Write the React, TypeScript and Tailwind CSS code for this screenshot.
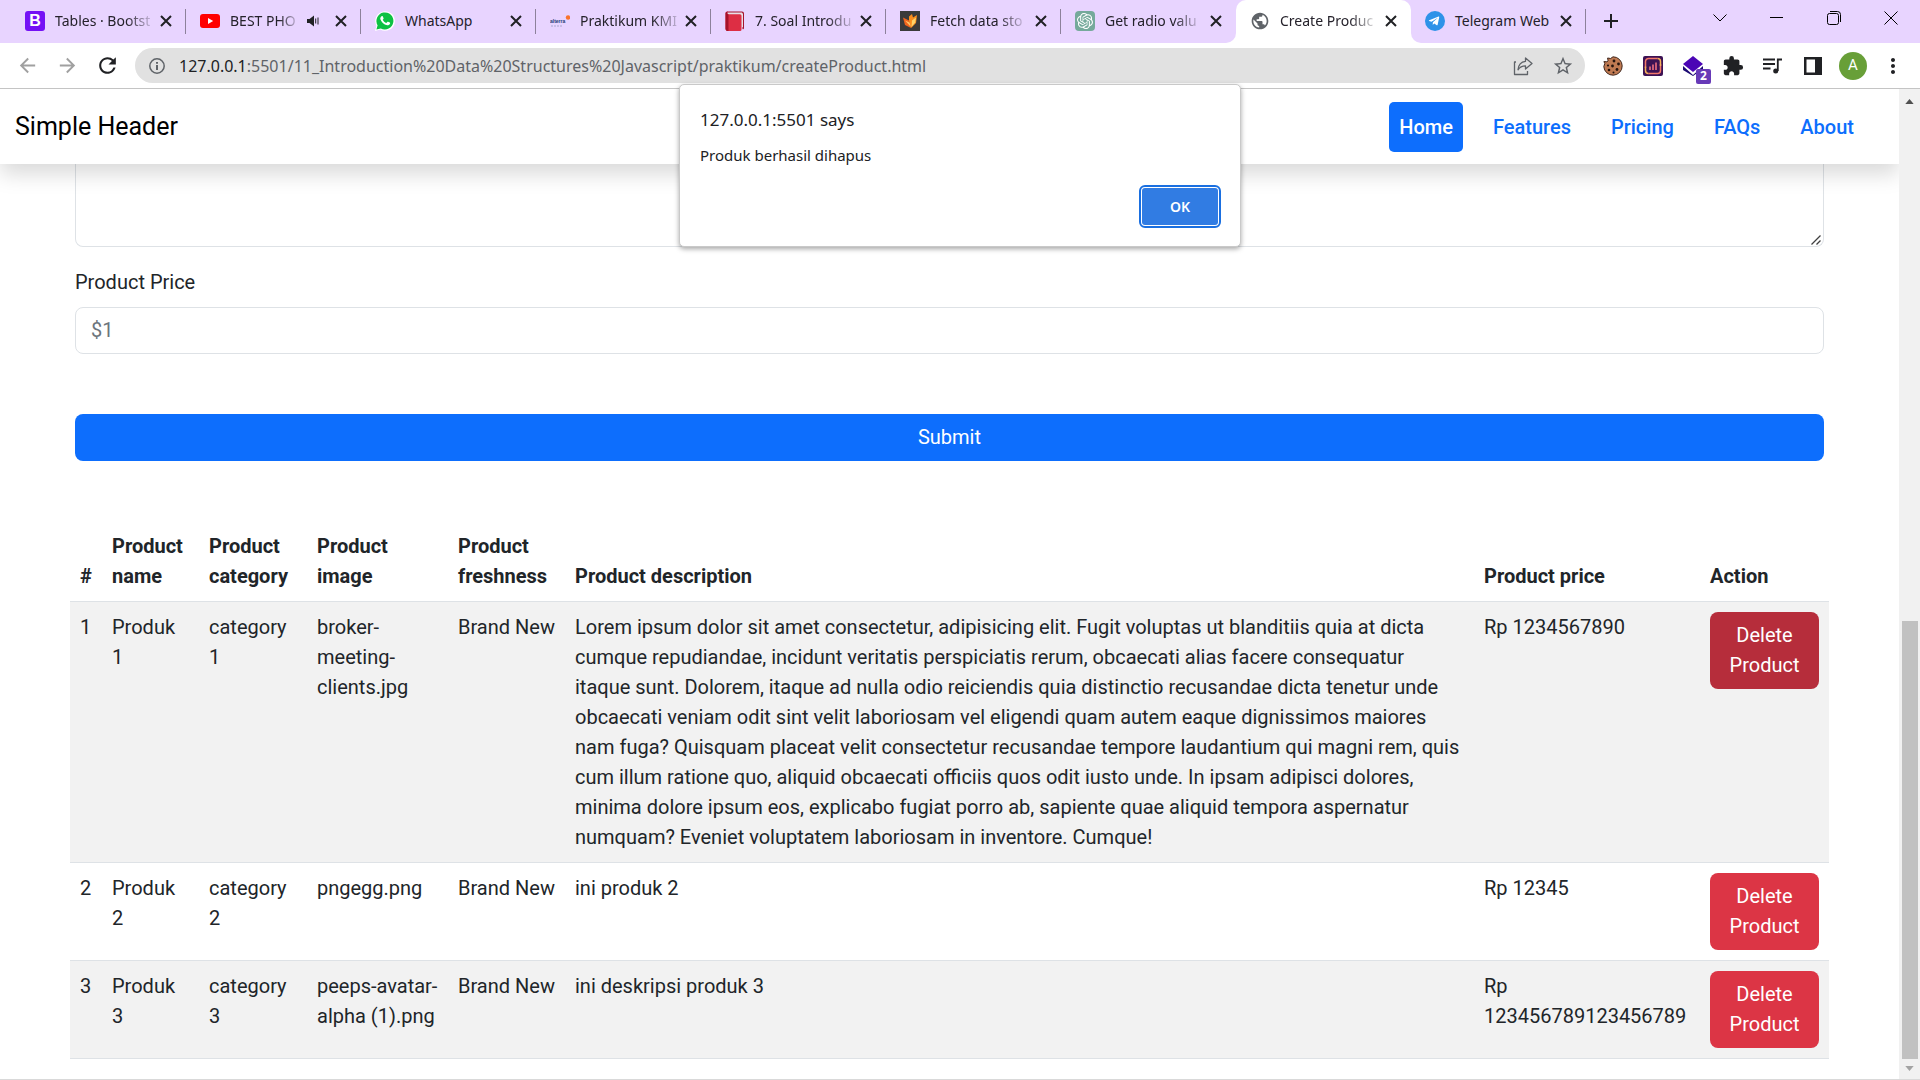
import React from "react";
import {
  MdArrowBack,
  MdArrowForward,
  MdRefresh,
  MdStarBorder,
  MdExtension,
  MdMoreVert,
  MdPublic,
} from "react-icons/md";
import { FaTelegramPlane } from "react-icons/fa";
import { SiOpenai } from "react-icons/si";

const BootstrapIcon = () => (
  <span className="flex size-5 items-center justify-center rounded-[3px] bg-[#7411f5] font-['Liberation_Sans'] text-base leading-5 font-bold text-white">
    B
  </span>
);

const YoutubeIcon = () => (
  <svg viewBox="0 0 20 20" className="size-5">
    <rect y="3" width="20" height="14" rx="3" fill="#f00" />
    <path d="M8 7l5.200 3-5.200 3z" fill="#fff" />
  </svg>
);

const WhatsappIcon = () => (
  <svg viewBox="0 0 20 20" className="size-5">
    <path d="M0 20l1.500-5.200A9.800 9.800 0 1 1 5.300 18.600z" fill="#fff" />
    <path d="M1.400 18.600l1.200-4.300A8.500 8.500 0 1 1 5.800 17.400z" fill="#0dc143" />
    <path
      d="M6.600 5.200c.5-.3 1-.2 1.200.2l.8 1.800c.1.300 0 .6-.9 1.600.8 1.600 2 2.600 3.600 3.300l1-1.200c.2-.3.500-.3.800-.2l1.700.8c.4.200.4.500.3 1-.3 1.300-1.700 1.900-2.900 1.800-3.400-.6-6.100-3.300-6.900-6.200-.2-1.300.4-2.300 1.300-2.900z"
      fill="#fff"
    />
  </svg>
);

const AlterraIcon = () => (
  <svg viewBox="0 0 20 20" className="size-5">
    <text x="0" y="12" fontSize="5" fontWeight="700" fontFamily="Liberation Sans" fill="#1d3a73">
      alterra
    </text>
    <path d="M1 15h12" stroke="#a9a6cf" strokeWidth="1" strokeDasharray="2 1" />
    <circle cx="18" cy="6.500" r="2.200" fill="#f9732b" />
  </svg>
);

const BookIcon = () => (
  <svg viewBox="0 0 20 20" className="size-5">
    <path d="M2.500.5H17a2 2 0 0 1 2 2V17a1 1 0 0 1-1.500 1L17 4H2z" fill="#a5122a" />
    <path d="M2.500 1.500H17L18 3v13l-1.500.5L16 4H2z" fill="#e6dfe6" />
    <path d="M.5 2.500C.5 1.200 1.500.4 3 .5 1.800 1.500 2 3 3.500 3.300H15a1.500 1.500 0 0 1 1.500 1.500V18.500A1.500 1.500 0 0 1 15 20H3a2.500 2.500 0 0 1-2.500-2.500z" fill="#dd2e44" />
    <path d="M.5 2.500C.5 1.200 1.500.4 3 .5 1.800 1.500 2 3 3.500 3.300V20H3a2.500 2.500 0 0 1-2.500-2.500z" fill="#a5122a" />
  </svg>
);

const FoxIcon = () => (
  <svg viewBox="0 0 20 20" className="size-5">
    <rect width="20" height="20" fill="#3b3a3a" />
    <path d="M3 6.500l6 3 2 7.500-6-3z" fill="#f1641c" />
    <path d="M9 10V5.500L12 3l1 3.500L17 4l-1 8-5 5z" fill="#fb8c1c" />
    <path d="M12 9.500l4-3-.8 5L11.500 16z" fill="#fdd36a" />
    <path d="M5 9.500l4.500 2 1.500 4.500z" fill="#fdc66a" />
  </svg>
);

const OpenaiIcon = () => (
  <span className="flex size-5 items-center justify-center rounded-[4px] bg-[#75a99b] text-white">
    <SiOpenai className="size-4" />
  </span>
);

const TelegramIcon = () => (
  <span className="flex size-5 items-center justify-center rounded-full bg-[#2e92e8] text-white">
    <FaTelegramPlane className="mr-0.5 size-3" />
  </span>
);

const SpeakerIcon = () => (
  <svg viewBox="0 0 12 12" className="size-3 shrink-0">
    <path d="M0 4h2.500L7 .5v11L2.500 8H0z" fill="#202124" />
    <path d="M8.700 3.500v5M11 2.500v7" stroke="#202124" strokeWidth="1" />
  </svg>
);

type Tab = { title: string; icon: React.ReactNode; audio?: boolean; active?: boolean; fade?: boolean };

const tabs: Tab[] = [
  { title: "Tables · Bootst", icon: <BootstrapIcon />, fade: true },
  { title: "BEST PHO", icon: <YoutubeIcon />, audio: true, fade: true },
  { title: "WhatsApp", icon: <WhatsappIcon /> },
  { title: "Praktikum KMI", icon: <AlterraIcon />, fade: true },
  { title: "7. Soal Introdu", icon: <BookIcon />, fade: true },
  { title: "Fetch data sto", icon: <FoxIcon />, fade: true },
  { title: "Get radio valu", icon: <OpenaiIcon />, fade: true },
  { title: "Create Produc", icon: <MdPublic className="size-5 text-[#5f6368]" />, active: true, fade: true },
  { title: "Telegram Web", icon: <TelegramIcon /> },
];

function TabStrip() {
  const activeIndex = tabs.findIndex((t) => t.active);
  return (
    <div className="flex h-[43px] bg-[#e8d4ff] pl-[11px]">
      {tabs.map((t, i) => (
        <div key={t.title} className={`min-w-0 flex-[0_1_175px] ${i === activeIndex - 1 || i === activeIndex + 1 ? "bg-white" : ""}`}>
          <div
            className={`flex h-full items-center ${
              t.active
                ? "rounded-t-[10px] bg-white"
                : i === activeIndex - 1
                  ? "rounded-br-[10px] bg-[#e8d4ff]"
                  : i === activeIndex + 1
                    ? "rounded-bl-[10px] bg-[#e8d4ff]"
                    : ""
            }`}
          >
            <div className="flex min-w-0 flex-1 items-center pr-[9px] pb-px pl-[14px]">
              <span className="size-5 shrink-0">{t.icon}</span>
              <a href="#" className="ml-2.5 min-w-0 flex-1 text-sm leading-5 whitespace-nowrap text-[#25222b]">
                <span className={t.fade ? "[mask-image:linear-gradient(to_right,black_75%,rgb(0_0_0/0.2))]" : ""}>{t.title}</span>
              </a>
              <span className={`flex items-center ${t.audio ? "gap-3" : ""}`}>
                {t.audio && <SpeakerIcon />}
                <button aria-label={`Close ${t.title}`} className="flex size-5 items-center justify-center text-[#202124]">
                  <svg viewBox="0 0 12 12" className="size-3" fill="none" stroke="currentColor" strokeWidth="2">
                    <path d="M1 1l10 10M11 1L1 11" />
                  </svg>
                </button>
              </span>
            </div>
            <span className={`h-[25px] w-px ${t.active || i === activeIndex - 1 ? "" : "bg-[#8d819b]"}`} />
          </div>
        </div>
      ))}
      <button aria-label="New tab" className="ml-[18px] flex items-center pb-px text-[#202124]">
        <svg viewBox="0 0 14 14" className="size-3.5" fill="none" stroke="currentColor" strokeWidth="2">
          <path d="M7 0v14M0 7h14" />
        </svg>
      </button>
      <div className="ml-auto flex h-[35px] items-center pr-px text-black">
        <button aria-label="Search tabs" className="flex w-[57px] justify-center">
          <svg viewBox="0 0 14 8" className="h-2 w-3.5" fill="none" stroke="currentColor">
            <path d="M.5.500l6.500 6.500 6.500-6.500" />
          </svg>
        </button>
        <button aria-label="Minimize" className="flex w-[57px] justify-center">
          <span className="h-px w-[13px] bg-black" />
        </button>
        <button aria-label="Restore" className="flex w-[57px] justify-center">
          <svg viewBox="0 0 14 14" className="size-3.5" fill="none" stroke="currentColor">
            <rect x=".5" y="2.500" width="11" height="11" rx="2" />
            <path d="M3 .5h7.500a3 3 0 0 1 3 3V11" />
          </svg>
        </button>
        <button aria-label="Close window" className="flex w-[57px] justify-center">
          <svg viewBox="0 0 14 14" className="size-3.5" fill="none" stroke="currentColor">
            <path d="M.5.500l13 13M13.500.500l-13 13" />
          </svg>
        </button>
      </div>
    </div>
  );
}

const IconSlot = ({ label, children }: { label: string; children: React.ReactNode }) => (
  <button aria-label={label} className="relative flex w-10 shrink-0 items-center justify-center">
    {children}
  </button>
);

function Toolbar() {
  return (
    <div className="flex h-[46px] items-center border-b border-[#c4c4c4] bg-white pr-[7px] pl-[7px]">
      <IconSlot label="Back">
        <MdArrowBack className="size-[23px] text-[#a0a0a0]" />
      </IconSlot>
      <IconSlot label="Forward">
        <MdArrowForward className="size-[23px] text-[#a0a0a0]" />
      </IconSlot>
      <IconSlot label="Reload">
        <MdRefresh className="size-[25px] text-[#202124]" />
      </IconSlot>
      <div className="ml-2 flex h-[35px] min-w-0 flex-1 items-center rounded-full bg-[#e1e1e1] pr-0.5 pl-3.5 text-[#5f6368]">
        <svg viewBox="0 0 16 16" className="size-4 shrink-0" fill="none" stroke="currentColor" strokeWidth="1.500">
          <circle cx="8" cy="8" r="7.200" />
          <path d="M8 7v5M8 4v1.800" strokeWidth="2" />
        </svg>
        <div className="ml-3.5 min-w-0 flex-1 truncate text-base leading-6">
          <span className="text-[#202124]">127.0.0.1</span>
          :5501/11_Introduction%20Data%20Structures%20Javascript/praktikum/createProduct.html
        </div>
        <IconSlot label="Share">
          <svg viewBox="0 0 20 20" className="size-5" fill="none" stroke="currentColor" strokeWidth="1.300" strokeLinejoin="round">
            <path d="M3 6H1.500v12.500h13V15" />
            <path d="M12.500 2l6.500 5.500-6.500 5.500v-3.200c-3.500 0-5.800 1.200-7.500 4 .4-4.600 3-8 7.500-8.500z" />
          </svg>
        </IconSlot>
        <IconSlot label="Bookmark">
          <MdStarBorder className="size-[22px]" />
        </IconSlot>
      </div>
      <div className="ml-2 flex items-center">
        <IconSlot label="Cookie editor">
          <svg viewBox="0 0 20 20" className="size-5">
            <path
              d="M10 .8a9.200 9.200 0 1 1-9.200 9.700l1-3L.9 5.600l3 .2 1.200-1L4.600 2l3 .5z"
              fill="#bf7a52"
              stroke="#3f2419"
              strokeWidth="1"
            />
            <g fill="#23130e">
              <circle cx="11" cy="5" r="1.400" />
              <circle cx="15.500" cy="8" r="1.400" />
              <circle cx="9.500" cy="10" r="1.400" />
              <circle cx="5" cy="9.500" r="1.100" />
              <circle cx="14" cy="13.500" r="1.400" />
              <circle cx="6" cy="14" r="1.300" />
              <circle cx="10.500" cy="16.500" r="1" />
            </g>
          </svg>
        </IconSlot>
        <IconSlot label="Insights">
          <svg viewBox="0 0 20 20" className="size-5" fill="none">
            <rect width="20" height="20" rx="2" fill="#3c1254" />
            <path d="M2.500 12V5.500a3 3 0 0 1 3-3h9M17.500 8v6.500a3 3 0 0 1-3 3h-9" stroke="#f2776a" strokeWidth="1.500" />
            <path d="M14.500 2.500a3 3 0 0 1 3 3V10M5.500 17.500a3 3 0 0 1-3-3v-4" stroke="#f8b25c" strokeWidth="1.500" />
            <path d="M7 14v-3.500M10 14V8.500M13 14V6.500" stroke="#ee6f7f" strokeWidth="1.600" />
          </svg>
        </IconSlot>
        <IconSlot label="Layers">
          <svg viewBox="0 0 20 20" className="size-5">
            <path d="M0 10l10 9 10-9v3l-10 7-10-6z" fill="#1c0a73" />
            <path d="M10 0l10 8-10 8L0 8z" fill="#4b05b5" />
          </svg>
          <span className="absolute top-[13px] left-[23px] flex h-[15px] w-[15px] items-center justify-center rounded-[2px] bg-[#673ab7] text-xs leading-none font-bold text-white">
            2
          </span>
        </IconSlot>
        <IconSlot label="Extensions">
          <MdExtension className="size-[22px] text-[#202124]" />
        </IconSlot>
        <IconSlot label="Media control">
          <svg viewBox="0 0 20 16" className="h-4 w-5" fill="none" stroke="#202124" strokeWidth="1.800">
            <path d="M0 1.500h12M0 6h12M0 10.500h7.500M14.800 13V1.500H19" />
            <circle cx="12.700" cy="13" r="2.500" fill="#202124" stroke="none" />
          </svg>
        </IconSlot>
        <IconSlot label="Side panel">
          <svg viewBox="0 0 18 18" className="size-[18px]">
            <path d="M0 0h18v18H0zM2.500 2.500v13h8.500v-13z" fill="#202124" fillRule="evenodd" />
          </svg>
        </IconSlot>
        <IconSlot label="Profile">
          <span className="flex size-7 items-center justify-center rounded-full bg-[#689f38] font-[Roboto] text-[15px] leading-none text-white">A</span>
        </IconSlot>
        <IconSlot label="Menu">
          <MdMoreVert className="size-6 text-[#202124]" />
        </IconSlot>
      </div>
    </div>
  );
}

const navItems = ["Home", "Features", "Pricing", "FAQs", "About"];

const products = [
  {
    name: "Produk 1",
    category: "category 1",
    image: "broker-meeting-clients.jpg",
    description:
      "Lorem ipsum dolor sit amet consectetur, adipisicing elit. Fugit voluptas ut blanditiis quia at dicta cumque repudiandae, incidunt veritatis perspiciatis rerum, obcaecati alias facere consequatur itaque sunt. Dolorem, itaque ad nulla odio reiciendis quia distinctio recusandae dicta tenetur unde obcaecati veniam odit sint velit laboriosam vel eligendi quam autem eaque dignissimos maiores nam fuga? Quisquam placeat velit consectetur recusandae tempore laudantium qui magni rem, quis cum illum ratione quo, aliquid obcaecati officiis quos odit iusto unde. In ipsam adipisci dolores, minima dolore ipsum eos, explicabo fugiat porro ab, sapiente quae aliquid tempora aspernatur numquam? Eveniet voluptatem laboriosam in inventore. Cumque!",
    price: "Rp 1234567890",
    pressed: true,
  },
  {
    name: "Produk 2",
    category: "category 2",
    image: "pngegg.png",
    description: "ini produk 2",
    price: "Rp 12345",
  },
  {
    name: "Produk 3",
    category: "category 3",
    image: "peeps-avatar-alpha (1).png",
    description: "ini deskripsi produk 3",
    price: "Rp 123456789123456789",
  },
];

const headings = [
  "#",
  "Product name",
  "Product category",
  "Product image",
  "Product freshness",
  "Product description",
  "Product price",
  "Action",
];

function ProductTable() {
  return (
    <table className="w-full table-fixed border-collapse text-left">
      <colgroup>
        <col className="w-8" />
        <col className="w-[97px]" />
        <col className="w-[108px]" />
        <col className="w-[141px]" />
        <col className="w-[117px]" />
        <col />
        <col className="w-[226px]" />
        <col className="w-[129px]" />
      </colgroup>
      <thead>
        <tr className="border-b border-[#dee2e6]">
          {headings.map((h) => (
            <th key={h} className="p-2.5 align-bottom font-bold">
              {h}
            </th>
          ))}
        </tr>
      </thead>
      <tbody>
        {products.map((p, i) => (
          <tr key={p.name} className="border-b border-[#dee2e6] align-top odd:bg-[#f2f2f2]">
            <td className="p-2.5">{i + 1}</td>
            <td className="p-2.5">{p.name}</td>
            <td className="p-2.5">{p.category}</td>
            <td className="p-2.5">{p.image}</td>
            <td className="p-2.5 whitespace-nowrap">Brand New</td>
            <td className="p-2.5">{p.description}</td>
            <td className="p-2.5">{p.price}</td>
            <td className="p-2.5">
              <button className={`block h-[77px] w-full rounded-lg px-4 pb-0.5 text-white ${p.pressed ? "bg-[#b62d3b]" : "bg-[#dc3545]"}`}>
                Delete Product
              </button>
            </td>
          </tr>
        ))}
      </tbody>
    </table>
  );
}

function Page() {
  return (
    <div className="min-w-0 flex-1 overflow-hidden bg-white">
      <header className="relative z-10 flex h-[75px] items-center justify-between bg-white pr-[35px] pl-[15px] shadow-[0_10px_20px_rgba(0,0,0,0.15)]">
        <a href="#" className="text-[25px] leading-9 text-black">
          Simple Header
        </a>
        <nav className="flex gap-5 font-medium">
          {navItems.map((n) => (
            <a
              key={n}
              href="#"
              className={`flex h-[50px] items-center rounded-[5px] px-2.5 ${n === "Home" ? "bg-[#0d6efd] text-white" : "text-[#0d6efd]"}`}
            >
              {n}
            </a>
          ))}
        </nav>
      </header>
      <form className="flex flex-col px-[75px]" onSubmit={(e) => e.preventDefault()}>
        <div className="relative">
          <textarea
            aria-label="Product description"
            className="block h-[83px] w-full resize-none rounded-b-lg border border-t-0 border-[#dee2e6] outline-none"
          />
          <svg viewBox="0 0 10 10" className="absolute right-[3px] bottom-[2px] size-2.5" stroke="#3f3f3f" strokeWidth="1.300" fill="none">
            <path d="M.5 9.500l9-9M5.500 9.500l4-4" />
          </svg>
        </div>
        <label htmlFor="price" className="mt-5">
          Product Price
        </label>
        <input
          id="price"
          type="text"
          placeholder="$1"
          className="mt-2.5 h-[47px] w-full rounded-lg border border-[#dee2e6] px-[15px] pb-0.5 outline-none placeholder:text-[#6c757d]"
        />
        <button className="mt-[60px] h-[47px] w-full rounded-lg bg-[#0d6efd] pb-0.5 text-white">Submit</button>
      </form>
      <div className="mt-[60px] px-[70px] pb-5">
        <ProductTable />
      </div>
    </div>
  );
}

function Scrollbar() {
  return (
    <div className="flex w-[21px] flex-col items-center bg-[#f1f1f1]">
      <svg viewBox="0 0 10 6" className="mt-2.5 mb-1 h-[5px] w-[9px] shrink-0">
        <path d="M5 0l5 6H0z" fill="#505050" />
      </svg>
      <div className="grow-[512]" />
      <div className="w-4 grow-[437] bg-[#c1c1c1]" />
      <svg viewBox="0 0 10 6" className="mt-[7px] mb-2 h-[5px] w-[9px] shrink-0">
        <path d="M0 0h10l-5 6z" fill="#a3a3a3" />
      </svg>
    </div>
  );
}

function AlertDialog() {
  return (
    <div
      role="alertdialog"
      aria-labelledby="alert-title"
      className="absolute top-[84px] left-1/2 z-20 w-[562px] -translate-x-1/2 rounded-[5px] border border-[#c9c9c9] bg-white pt-[23px] pr-[19px] pb-[18px] pl-5 text-[#202124] shadow-[0_2px_5px_rgba(0,0,0,0.35)]"
    >
      <h2 id="alert-title" className="text-[17px] leading-6">
        127.0.0.1:5501 says
      </h2>
      <p className="mt-[11px] text-[15px] leading-6">Produk berhasil dihapus</p>
      <div className="mt-[18px] flex justify-end">
        <button className="h-[43px] w-[82px] rounded-md border-2 border-[#1a6fe0] bg-white p-px text-sm font-semibold text-white">
          <span className="flex h-full items-center justify-center rounded-[3px] bg-[#317ce3]">OK</span>
        </button>
      </div>
    </div>
  );
}

export default function App() {
  return (
    <div className="relative flex min-h-screen flex-col border-b-2 border-[#d9d9d9] bg-white font-['Noto_Sans',sans-serif]">
      <TabStrip />
      <Toolbar />
      <div className="flex flex-1 font-[Roboto,sans-serif] text-[20px] leading-[30px] text-[#212529]">
        <Page />
        <Scrollbar />
      </div>
      <AlertDialog />
    </div>
  );
}
